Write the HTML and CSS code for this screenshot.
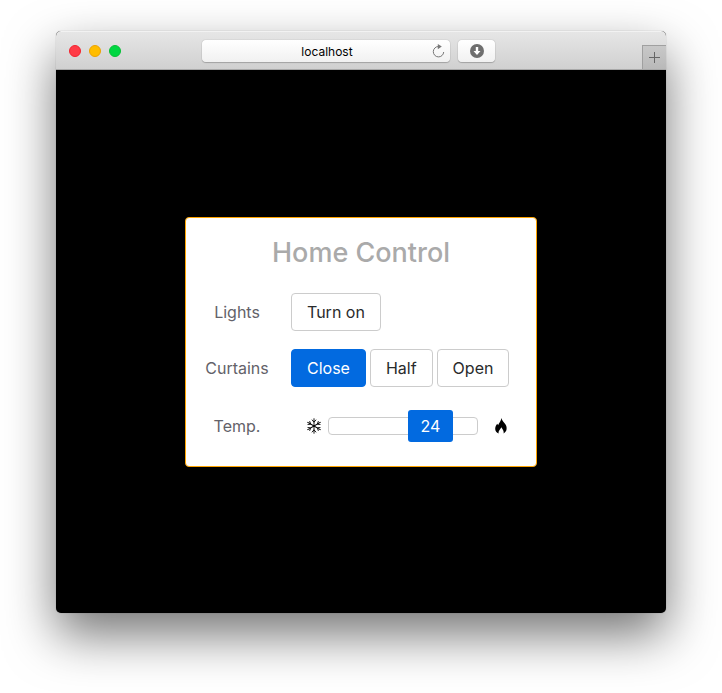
FILE: index.html
```html
<!DOCTYPE html>
<html lang="en">
<head>
<meta charset="utf-8">
<meta name="viewport" content="width=device-width, initial-scale=1">
<title>Home Control</title>
<link rel="stylesheet" href="styles.css">
</head>
<body>
<div class="window">
  <header class="toolbar">
    <div class="lights">
      <button class="light light-close" type="button" aria-label="Close window"></button>
      <button class="light light-minimize" type="button" aria-label="Minimize window"></button>
      <button class="light light-zoom" type="button" aria-label="Zoom window"></button>
    </div>
    <div class="address">
      <input class="address-input" type="text" value="localhost" aria-label="Address">
      <button class="reload" type="button" aria-label="Reload">
        <svg width="14" height="14" viewBox="0 0 14 14" fill="none" stroke="#777"><path d="M7.500 2.500A5.200 5.200 0 1 0 12.700 8"/><path d="M6.800 0l4 2.600-4 2.600z" fill="#777" stroke="none"/></svg>
      </button>
    </div>
    <button class="downloads" type="button" aria-label="Downloads">
      <svg width="14" height="14" viewBox="0 0 14 14"><circle cx="7" cy="7" r="7" fill="#6e6e6e"/><path d="M5.800 3h2.400v4h2.300L7 11 3.500 7h2.300z" fill="#fff"/></svg>
    </button>
    <button class="new-tab" type="button" aria-label="New tab">
      <svg width="11" height="11" viewBox="0 0 11 11" stroke="#666"><path d="M5.500 0v11M0 5.500h11"/></svg>
    </button>
  </header>
  <main class="page">
    <section class="card">
      <h1 class="title">Home Control</h1>
      <div class="controls">
        <span class="label" id="lights-label">Lights</span>
        <div class="buttons" role="group" aria-labelledby="lights-label">
          <button class="btn" type="button">Turn on</button>
        </div>
        <span class="label" id="curtains-label">Curtains</span>
        <div class="buttons" role="group" aria-labelledby="curtains-label">
          <button class="btn btn-active" type="button" aria-pressed="true">Close</button>
          <button class="btn" type="button" aria-pressed="false">Half</button>
          <button class="btn" type="button" aria-pressed="false">Open</button>
        </div>
        <label class="label" for="temp">Temp.</label>
        <div class="temperature">
          <svg class="cold" width="16" height="16" viewBox="0 0 16 16" fill="none" stroke="#000" stroke-width="0.900" aria-hidden="true">
            <path id="arm" d="M8 8V.3M5.900 1.700L8 4.200l2.100-2.500"/>
            <use href="#arm" transform="rotate(60 8 8)"/>
            <use href="#arm" transform="rotate(120 8 8)"/>
            <use href="#arm" transform="rotate(180 8 8)"/>
            <use href="#arm" transform="rotate(240 8 8)"/>
            <use href="#arm" transform="rotate(300 8 8)"/>
          </svg>
          <div class="slider">
            <input class="range" id="temp" type="range" min="8" max="29" value="24">
            <output class="value" for="temp" style="--position: 0.762">24</output>
          </div>
          <svg class="hot" width="12" height="16" viewBox="0 0 12 16" aria-hidden="true"><path d="M6.500 0C6.900 2 8 3.500 9.800 5.500 11.200 7.200 11.800 8.800 11.600 11c-.2 2-1.200 3.300-3 4.500.5-2.200-.6-3.500-2.300-6.300C5.500 11.200 3 12.800 3.700 15.500 1.500 14.500.3 12.900.2 10.900.1 8.700 1.200 7 2.300 5.700l.8 1.600C4 5 6 3 6.500 0z"/></svg>
        </div>
      </div>
    </section>
  </main>
</div>
</body>
</html>
```
FILE: styles.css
```css
* {
  box-sizing: border-box;
}

body {
  margin: 0;
  padding: 31px 56px 80px;
  background: #fff;
  font-family: Inter, "Liberation Sans", sans-serif;
  font-size: 16px;
  line-height: 24px;
}

button,
input {
  margin: 0;
  padding: 0;
  border: 0;
  font: inherit;
}

svg {
  display: block;
}

.window {
  display: flex;
  flex-direction: column;
  min-height: calc(100vh - 111px);
  overflow: hidden;
  border-radius: 5px;
  background: #000;
  box-shadow: 0 0 1px rgba(0, 0, 0, 0.4), 0 22px 50px rgba(0, 0, 0, 0.54);
}

.toolbar {
  display: flex;
  align-items: center;
  height: 39px;
  border-top: 1px solid #f2f2f2;
  border-bottom: 1px solid #a8a8a8;
  padding-left: 13px;
  background: linear-gradient(#e6e6e6, #d0d0d0);
}

.lights {
  display: flex;
  gap: 8px;
  margin-right: 81px;
}

.light {
  width: 12px;
  height: 12px;
  border: 1px solid;
  border-radius: 50%;
}

.light-close {
  border-color: #f3222e;
  background: #ff3b47;
}

.light-minimize {
  border-color: #eda200;
  background: #ffbd00;
}

.light-zoom {
  border-color: #06c036;
  background: #00d742;
}

.address,
.downloads {
  display: flex;
  align-items: center;
  height: 22px;
  border-radius: 4px;
  background: linear-gradient(#fff, #f1f1f1);
  box-shadow: 0 0 1px rgba(0, 0, 0, 0.4), 0 1px 1px rgba(0, 0, 0, 0.2);
}

.address {
  flex: 1;
  padding: 0 5px;
}

.address-input {
  flex: 1;
  min-width: 0;
  padding: 2px 0 0 16px;
  background: transparent;
  color: #000;
  font-size: 12px;
  line-height: 16px;
  text-align: center;
}

.reload {
  background: transparent;
}

.downloads {
  justify-content: center;
  width: 37px;
  margin-left: 8px;
}

.new-tab {
  display: flex;
  align-self: flex-end;
  align-items: center;
  justify-content: center;
  width: 24px;
  height: 24px;
  margin-left: 147px;
  border-top: 1px solid #a0a0a0;
  border-left: 1px solid #a0a0a0;
  background: linear-gradient(#c8c8c8, #b9b9b9);
}

.page {
  display: flex;
  flex: 1;
  align-items: center;
  justify-content: center;
}

.card {
  width: 352px;
  padding: 18px 19px 19px;
  border: 1px solid #ffa500;
  border-radius: 4px;
  background: #fff;
}

.title {
  margin: 0 0 23px;
  color: #aaa;
  font-size: 27px;
  font-weight: 500;
  line-height: 34px;
  text-align: center;
}

.controls {
  display: grid;
  grid-template-columns: 64px 1fr;
  gap: 18px 22px;
  align-items: center;
}

.label {
  color: #636269;
  text-align: center;
}

.buttons {
  display: flex;
  gap: 4px;
}

.btn {
  height: 38px;
  padding: 0 15px;
  border: 1px solid #ccc;
  border-radius: 4px;
  background: #fff;
  color: #292b2c;
  white-space: nowrap;
}

.btn-active {
  border-color: #026ae0;
  background: #026ae0;
  color: #fff;
}

.temperature {
  display: flex;
  align-items: center;
  height: 42px;
  padding-left: 15px;
}

.slider {
  position: relative;
  width: 150px;
  height: 32px;
  margin: 0 17px 0 6px;
}

.range {
  display: block;
  width: 100%;
  height: 32px;
  appearance: none;
  background: transparent;
}

.range::-webkit-slider-runnable-track {
  height: 18px;
  border: 1px solid #ccc;
  border-radius: 4px;
}

.range::-webkit-slider-thumb {
  width: 40px;
  height: 32px;
  margin-top: -8px;
  border-radius: 3px;
  appearance: none;
  background: #026ae0;
}

.value {
  position: absolute;
  top: 0;
  left: calc((100% - 45px) * var(--position));
  width: 45px;
  border-radius: 3px;
  background: #026ae0;
  color: #fff;
  line-height: 32px;
  text-align: center;
  pointer-events: none;
}
```
